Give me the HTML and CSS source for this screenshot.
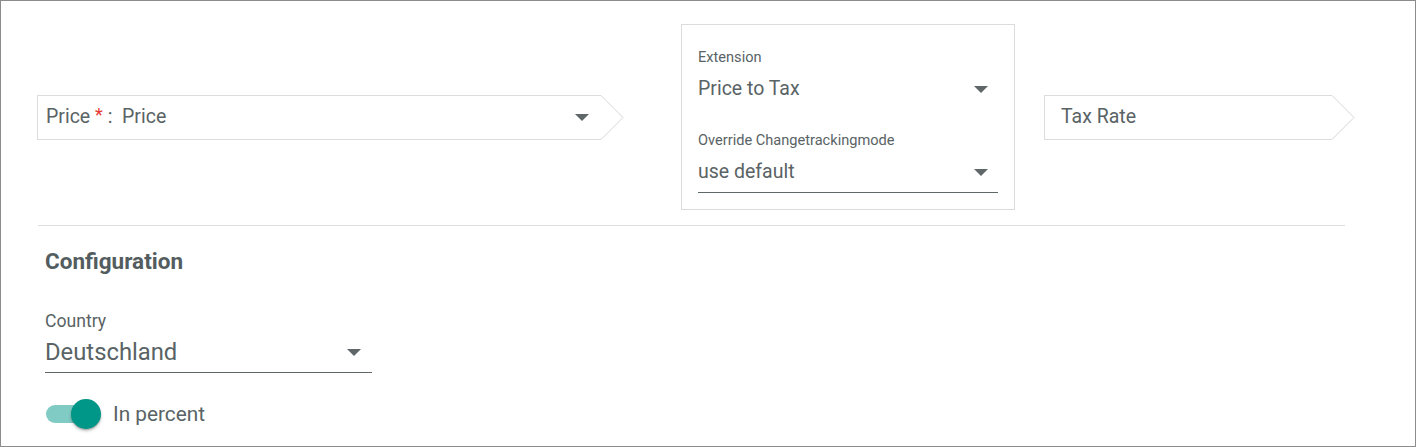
FILE: index.html
```html
<!DOCTYPE html>
<html>
<head>
<meta charset="utf-8">
<link rel="stylesheet" href="styles.css">
</head>
<body>
<div class="frame">
  <div class="top-row">
    <div class="chevron-field price-field">
      <div class="chevron-body">
        <span class="chev-text">Price <span class="req">*</span> :&nbsp; Price</span>
        <span class="caret"></span>
      </div>
      <svg class="chev-tip" width="23" height="45" viewBox="0 0 23 45"><polyline points="0,0.5 22,22.5 0,44.5" fill="none" stroke="#d6d6d6" stroke-width="1"/></svg>
    </div>
    <div class="panel">
      <div class="pfield">
        <div class="plabel">Extension</div>
        <div class="pvalue noline"><span>Price to Tax</span><span class="caret"></span></div>
      </div>
      <div class="pfield second">
        <div class="plabel">Override Changetrackingmode</div>
        <div class="pvalue"><span>use default</span><span class="caret"></span></div>
      </div>
    </div>
    <div class="chevron-field tax-field">
      <div class="chevron-body tax-body">
        <span class="chev-text">Tax Rate</span>
      </div>
      <svg class="chev-tip" width="23" height="45" viewBox="0 0 23 45"><polyline points="0,0.5 22,22.5 0,44.5" fill="none" stroke="#d6d6d6" stroke-width="1"/></svg>
    </div>
  </div>
  <div class="divider"></div>
  <div class="config">
    <h2 class="config-title">Configuration</h2>
    <div class="country">
      <div class="clabel">Country</div>
      <div class="cvalue"><span>Deutschland</span><span class="caret"></span></div>
    </div>
    <div class="toggle-row">
      <div class="toggle">
        <div class="track"></div>
        <div class="thumb"></div>
      </div>
      <span class="toggle-label">In percent</span>
    </div>
  </div>
</div>
</body>
</html>
```
FILE: styles.css
```css
html, body {
  margin: 0;
  padding: 0;
  background: #fff;
}
body {
  font-family: Roboto, "Liberation Sans", Arial, sans-serif;
  color: #596365;
}
.frame {
  box-sizing: border-box;
  width: 1416px;
  height: 447px;
  border: 1px solid #8c8c8c;
  padding: 23px 0 0 36px;
  overflow: hidden;
}
.top-row {
  display: flex;
  align-items: center;
}
.chevron-field {
  display: flex;
  height: 45px;
}
.price-field {
  width: 587px;
}
.tax-field {
  width: 311px;
  margin-left: 29px;
}
.chevron-body {
  flex: 1;
  box-sizing: border-box;
  border: 1px solid #dcdcdc;
  border-right: none;
  display: flex;
  align-items: center;
  justify-content: space-between;
  padding: 0 12px 0 8px;
}
.tax-body {
  padding-left: 16px;
}
.chev-tip {
  display: block;
  flex: none;
}
.chev-text {
  font-size: 19.5px;
  line-height: 24px;
  color: #596365;
  white-space: nowrap;
}
.req {
  color: #e53935;
  font-size: 18px;
  position: relative;
  top: -2px;
}
.caret {
  width: 0;
  height: 0;
  border-left: 7.5px solid transparent;
  border-right: 7.5px solid transparent;
  border-top: 7px solid #5f6769;
  flex: none;
}
.panel {
  box-sizing: border-box;
  width: 334px;
  height: 186px;
  margin-left: 57px;
  border: 1px solid #dcdcdc;
  padding: 23px 16px 15px 16px;
}
.pfield.second {
  margin-top: 21px;
}
.plabel {
  font-size: 14.6px;
  line-height: 18px;
  margin-bottom: 11px;
}
.pvalue {
  display: flex;
  align-items: center;
  justify-content: space-between;
  font-size: 19.5px;
  line-height: 24px;
  padding: 0 10px 8px 0;
  border-bottom: 1px solid #5f6769;
}
.pvalue.noline {
  border-bottom-color: transparent;
}
.divider {
  width: 1307px;
  height: 1px;
  background: #dedede;
  margin: 15px 0 0 1px;
}
.config {
  padding-left: 8px;
}
.config-title {
  margin: 22px 0 0 0;
  font-size: 22.5px;
  line-height: 26px;
  font-weight: 700;
  color: #535d60;
}
.country {
  width: 327px;
  margin-top: 37px;
}
.clabel {
  font-size: 17.6px;
  line-height: 20px;
}
.cvalue {
  display: flex;
  align-items: center;
  justify-content: space-between;
  margin-top: 7px;
  font-size: 23.8px;
  line-height: 28px;
  padding: 0 11px 6px 0;
  border-bottom: 1px solid #5f6769;
}
.toggle-row {
  display: flex;
  align-items: center;
  margin-top: 26px;
  margin-left: 1px;
}
.toggle {
  position: relative;
  width: 55px;
  height: 30px;
  flex: none;
}
.track {
  position: absolute;
  left: 0;
  top: 6px;
  width: 48px;
  height: 18px;
  border-radius: 9px;
  background: #80cbc4;
}
.thumb {
  position: absolute;
  left: 25px;
  top: 0;
  width: 30px;
  height: 30px;
  border-radius: 50%;
  background: #009688;
  box-shadow: 0 2px 3px rgba(0,0,0,0.25), 0 1px 1px rgba(0,0,0,0.15);
}
.toggle-label {
  margin-left: 12px;
  font-size: 20.8px;
  line-height: 26px;
}
```
